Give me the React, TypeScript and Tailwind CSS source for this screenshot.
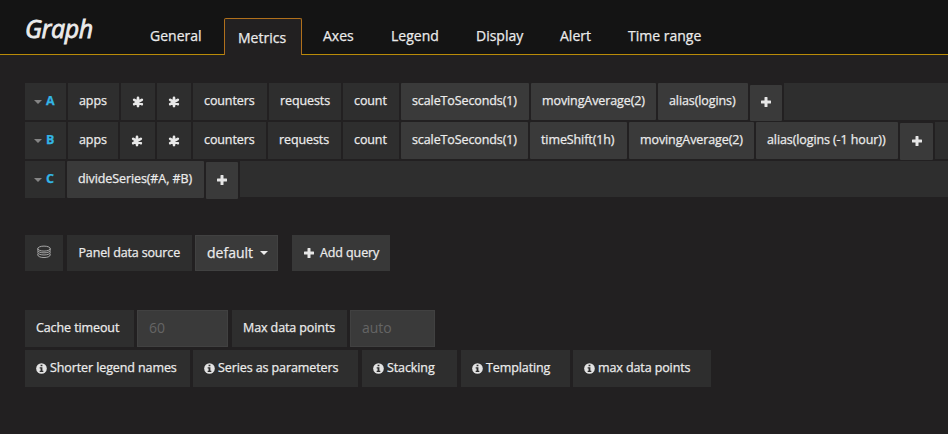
import React from "react";

const seg = "flex h-[37px] shrink-0 items-center whitespace-nowrap pl-[11px]";
const dark = "bg-[#2e2e2e]";
const light = "bg-[#3a3a3a] rounded-[1px]";

function Plus({ className = "" }: { className?: string }) {
  return (
    <svg viewBox="0 0 10 10" className={`size-[10px] shrink-0 ${className}`} fill="#e6e6e6">
      <path d="M4 0h2q.5 0 .5.5v3h3q.5 0 .5.5v2q0 .5-.5.5h-3v3q0 .5-.5.5H4q-.5 0-.5-.5v-3h-3Q0 6.500 0 6V4q0-.5.5-.5h3v-3Q3.500 0 4 0Z" />
    </svg>
  );
}

function Caret({ className }: { className: string }) {
  return (
    <svg viewBox="0 0 8 4" className={`h-1 w-2 shrink-0 ${className}`} fill="currentColor">
      <path d="M0 0h8L4 4Z" />
    </svg>
  );
}

function Asterisk() {
  return (
    <svg viewBox="0 0 12 12" className="size-3 shrink-0" fill="none" stroke="#e8e8e8" strokeWidth="2.700" strokeLinecap="round">
      <path d="M6 1.900v8.200M2.200 3.800l7.600 4.400M2.200 8.200l7.600-4.400" />
    </svg>
  );
}

function Info() {
  return (
    <svg viewBox="0 0 12 12" className="mr-[3px] size-[11px] shrink-0">
      <circle cx="6" cy="6" r="5.800" fill="#e3e3e3" />
      <path d="M5 1.900h2v1.600H5ZM4 4.700h3v3.800h1v1.300H4V8.500h1V6H4Z" fill="#2e2e2e" />
    </svg>
  );
}

type Part = { text: string; width: string; fn?: boolean };
type Query = { id: string; head: string; parts: Part[]; plus: string; rest: string };

const queries: Query[] = [
  {
    id: "A",
    head: "w-[41px]",
    parts: [
      { text: "apps", width: "w-[51px]" },
      { text: "*", width: "w-[34px]" },
      { text: "*", width: "w-[34px]" },
      { text: "counters", width: "w-[74px]" },
      { text: "requests", width: "w-[72px]" },
      { text: "count", width: "w-[56px]" },
      { text: "scaleToSeconds(1)", width: "w-[128px]", fn: true },
      { text: "movingAverage(2)", width: "w-[125px]", fn: true },
      { text: "alias(logins)", width: "w-[90px]", fn: true },
    ],
    plus: "w-8 h-9 mt-0.5",
    rest: "h-[37px]",
  },
  {
    id: "B",
    head: "w-[41px]",
    parts: [
      { text: "apps", width: "w-[50px]" },
      { text: "*", width: "w-[35px]" },
      { text: "*", width: "w-[34px]" },
      { text: "counters", width: "w-[73px]" },
      { text: "requests", width: "w-[73px]" },
      { text: "count", width: "w-[56px]" },
      { text: "scaleToSeconds(1)", width: "w-[127px]", fn: true },
      { text: "timeShift(1h)", width: "w-[97px]", fn: true },
      { text: "movingAverage(2)", width: "w-[125px]", fn: true },
      { text: "alias(logins (-1 hour))", width: "w-[142px]", fn: true },
    ],
    plus: "w-[33px] h-[37px] mt-px",
    rest: "h-[37px]",
  },
  {
    id: "C",
    head: "w-10",
    parts: [{ text: "divideSeries(#A, #B)", width: "w-[137px]", fn: true }],
    plus: "w-8 h-[37px] mt-px",
    rest: "h-9",
  },
];

const tabs = [
  { label: "General", place: "w-[74px] pl-0" },
  { label: "Metrics", place: "w-[78px] pl-[13px]" },
  { label: "Axes", place: "w-[89px] pl-[21px]" },
  { label: "Legend", place: "w-[85px] pl-0" },
  { label: "Display", place: "w-[84px] pl-0" },
  { label: "Alert", place: "w-[68px] pl-0" },
  { label: "Time range", place: "w-[90px] pl-0" },
];

const tips = [
  { text: "Shorter legend names", width: "w-[165px] mr-[3px]" },
  { text: "Series as parameters", width: "w-[165px] mr-1" },
  { text: "Stacking", width: "w-[95px] mr-1" },
  { text: "Templating", width: "w-[109px] mr-[3px]" },
  { text: "max data points", width: "w-[138px]" },
];

const input = "flex h-[37px] items-center border border-[#414141] bg-[#3a3a3a] pb-0.5 pl-[11px] text-[14px] text-[#656565] tracking-normal [-webkit-text-stroke:0]";

export default function App() {
  return (
    <div className="h-[434px] w-[948px] overflow-hidden bg-[#222021] font-['Open_Sans',sans-serif] text-[12.5px] tracking-[-0.1px] text-[#ebebeb] [-webkit-text-stroke:0.25px]">
      <header className="flex h-[55px] border-b border-[#b98b08] bg-[#141414]">
        <h1 className="w-[150px] shrink-0 pl-[25px] pt-[10px] text-[25px] leading-9 tracking-[-0.4px] italic [-webkit-text-stroke:0.8px]">Graph</h1>
        {tabs.map((t) =>
          t.label === "Metrics" ? (
            <div key={t.label} className={`mt-[18px] h-[37px] shrink-0 rounded-t-[2px] border border-b-0 border-[#b0701c] bg-[#222021] pt-[9px] text-[14px] leading-5 tracking-normal ${t.place}`}>
              {t.label}
            </div>
          ) : (
            <div key={t.label} className={`shrink-0 whitespace-nowrap pt-[26px] text-[14px] leading-5 tracking-normal ${t.place}`}>
              {t.label}
            </div>
          ),
        )}
      </header>

      <section className="flex flex-col gap-0.5 pt-7 pl-[25px]">
        {queries.map((q) => (
          <div key={q.id} className="flex h-[37px] gap-0.5">
            <div className={`flex h-[37px] shrink-0 items-center gap-1 pl-[9px] ${dark} ${q.head}`}>
              <Caret className="text-[#858585]" />
              <span className="font-bold text-[#33b5e5]">{q.id}</span>
            </div>
            {q.parts.map((p, i) => (
              <div key={i} className={`${seg} ${p.fn ? light : dark} ${p.width}`}>
                {p.text === "*" ? <Asterisk /> : p.text}
              </div>
            ))}
            <div className={`flex shrink-0 items-center justify-center ${light} ${q.plus}`}>
              <Plus className="-mt-0.5" />
            </div>
            <div className={`flex-1 ${dark} ${q.rest}`} />
          </div>
        ))}
      </section>

      <section className="flex pt-[37px] pl-[25px]">
        <div className={`mr-1 flex h-9 w-[38px] items-center justify-center pb-0.5 ${dark}`}>
          <svg viewBox="0 0 14 14" className="size-[14px]" fill="none" stroke="#c4c4c4" strokeWidth="0.8">
            <ellipse cx="7" cy="3.600" rx="6.200" ry="2.500" />
            <path d="M.8 3.600v1.700c0 3.400 12.400 3.400 12.400 0V3.600M.8 6.300v1.200c0 3.300 12.400 3.300 12.400 0V6.300M.8 8.700v1.200c0 3.500 12.400 3.500 12.400 0V8.700" />
          </svg>
        </div>
        <div className={`mr-[3px] flex h-9 w-[125px] items-center pl-[11.5px] tracking-[-0.15px] ${dark}`}>Panel data source</div>
        <div className="mr-[14px] flex h-9 w-[83px] items-center border border-[#414141] bg-[#3a3a3a] pb-0.5 pl-[11px] text-[14px] tracking-normal">
          default
          <Caret className="ml-[7px] mt-0.5" />
        </div>
        <div className="flex h-9 w-[98px] items-center bg-[#383838] pl-3">
          <Plus className="mr-1.5 -mt-px" />
          Add query
        </div>
      </section>

      <section className="pt-[39px] pl-[25px]">
        <div className="flex">
          <div className={`${seg} ${dark} mr-[3px] w-[109px]`}>Cache timeout</div>
          <div className={`${input} mr-1 w-[91px]`}>60</div>
          <div className={`${seg} ${dark} mr-[3px] w-[115px]`}>Max data points</div>
          <div className={`${input} w-[85px]`}>auto</div>
        </div>
        <div className="flex pt-[3px]">
          {tips.map((t) => (
            <div key={t.text} className={`${seg} ${dark} ${t.width}`}>
              <Info />
              {t.text}
            </div>
          ))}
        </div>
      </section>
    </div>
  );
}
